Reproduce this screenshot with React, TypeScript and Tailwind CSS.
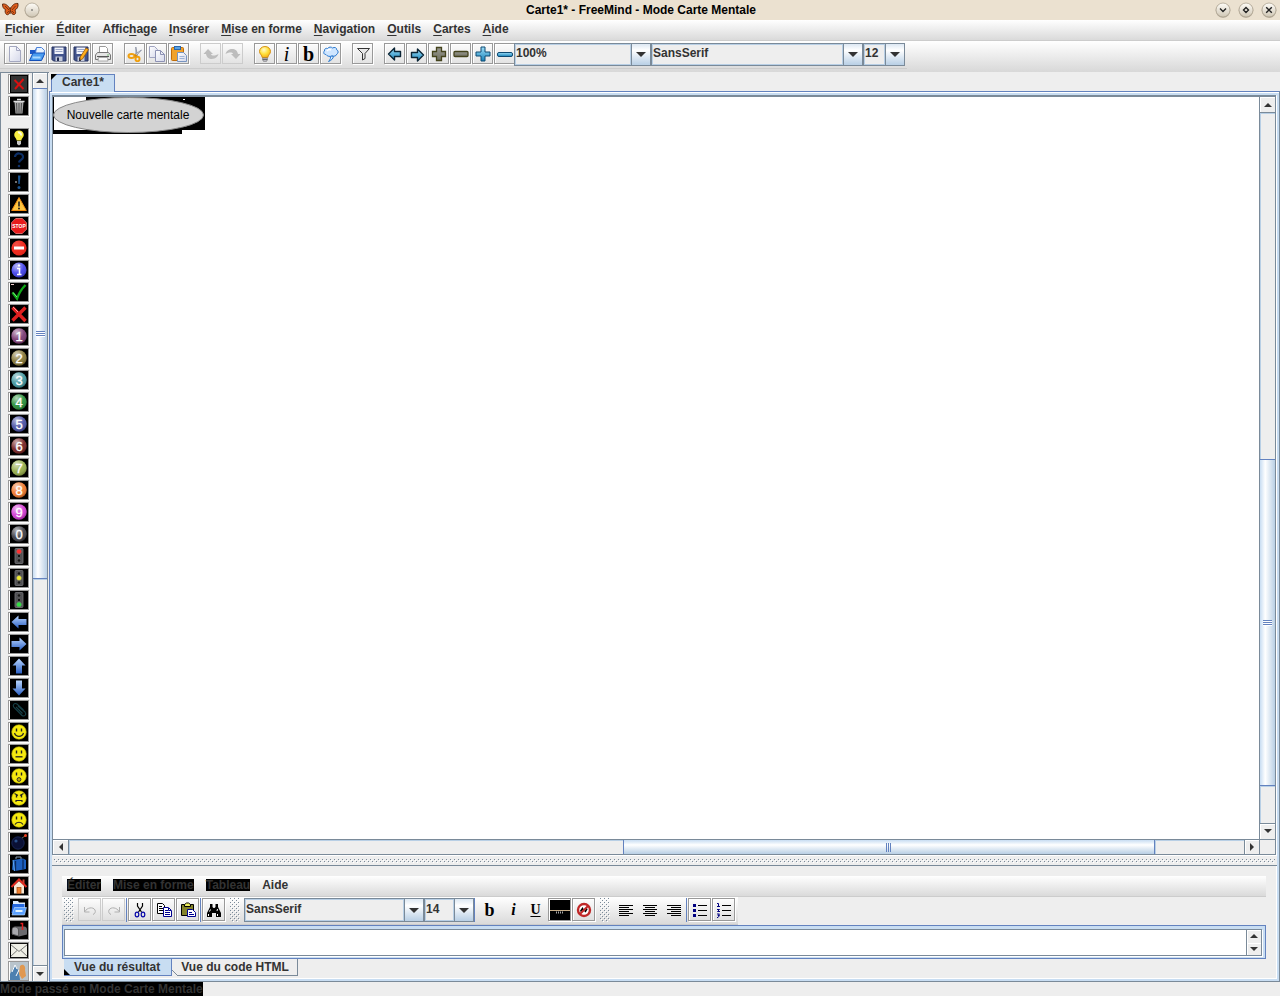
import React from "react";

type Kids = { children?: React.ReactNode };

function Svg({ size = 16, box = 16, children }: Kids & { size?: number; box?: number }) {
  return (
    <svg width={size} height={size} viewBox={`0 0 ${box} ${box}`} fill="none" aria-hidden="true" className="block shrink-0">
      {children}
    </svg>
  );
}

/* ---------- shared gradients ---------- */

function Defs() {
  return (
    <svg width="0" height="0" className="absolute" aria-hidden="true">
      <defs>
        <linearGradient id="blueV" x1="0" y1="0" x2="0" y2="1">
          <stop offset="0" stopColor="#b9d6ff" />
          <stop offset="1" stopColor="#2a5fc4" />
        </linearGradient>
        <linearGradient id="cyanV" x1="0" y1="0" x2="0" y2="1">
          <stop offset="0" stopColor="#9fe0fa" />
          <stop offset="1" stopColor="#1781b8" />
        </linearGradient>
        <linearGradient id="oliveV" x1="0" y1="0" x2="0" y2="1">
          <stop offset="0" stopColor="#9a9a92" />
          <stop offset="1" stopColor="#6f6f60" />
        </linearGradient>
        <linearGradient id="paper" x1="0" y1="0" x2="1" y2="1">
          <stop offset="0" stopColor="#ffffff" />
          <stop offset="1" stopColor="#d5d8ea" />
        </linearGradient>
        <radialGradient id="bulb" cx="0.4" cy="0.3" r="0.8">
          <stop offset="0" stopColor="#fffbd0" />
          <stop offset="0.5" stopColor="#ffe03a" />
          <stop offset="1" stopColor="#f0a010" />
        </radialGradient>
        <linearGradient id="knob" x1="0" y1="0" x2="0" y2="1">
          <stop offset="0" stopColor="#fffdf8" />
          <stop offset="1" stopColor="#cfc6b4" />
        </linearGradient>
        <radialGradient id="shine" cx="0.35" cy="0.25" r="0.8">
          <stop offset="0" stopColor="#ffffff" stopOpacity="0.65" />
          <stop offset="0.6" stopColor="#ffffff" stopOpacity="0.1" />
          <stop offset="1" stopColor="#000000" stopOpacity="0.3" />
        </radialGradient>
        <pattern id="bumps" width="4" height="4" patternUnits="userSpaceOnUse">
          <g shapeRendering="crispEdges">
            <rect x="0" y="0" width="1" height="1" fill="#7a8a99" />
            <rect x="2" y="2" width="1" height="1" fill="#7a8a99" />
            <rect x="1" y="1" width="1" height="1" fill="#fff" />
            <rect x="3" y="3" width="1" height="1" fill="#fff" />
          </g>
        </pattern>
      </defs>
    </svg>
  );
}

/* ---------- main toolbar icons ---------- */

const page = "M2.5.5h7l4 4v11h-11z";

const IconNew = () => (
  <Svg>
    <path d={page} fill="url(#paper)" stroke="#a4a8c0" />
    <path d="M9.500.5v4h4z" fill="#eef" stroke="#a4a8c0" />
  </Svg>
);
const IconOpen = () => (
  <Svg>
    <path d="M1 4h5l1-1.500h5l2 2V8H1z" fill="#1c58c8" />
    <path d="M7.500 1.500h5l3 3-1.500 7-8-2z" fill="#e6f2ff" stroke="#4a80d8" />
    <path d="M.5 14.500L4 7h12l-3.500 7.500z" fill="#4a9cf0" stroke="#1450b8" />
    <path d="M3.500 11.500h8" stroke="#a8d8ff" strokeWidth="2" />
  </Svg>
);
const Floppy = () => (
  <>
    <path d="M1 1h14v14H2.500L1 13.500z" fill="#41538c" stroke="#27335e" />
    <path d="M3.500 1.500h9V8h-9z" fill="#f1f3fa" />
    <path d="M4.500 3.500h7M4.500 5.500h7" stroke="#9aa6c8" />
    <path d="M4.500 10.500h7V15h-7z" fill="#c4cada" />
    <path d="M6 11.500h2V15H6z" fill="#222c50" />
  </>
);
const IconSave = () => <Svg><Floppy /></Svg>;
const IconSaveAs = () => (
  <Svg>
    <Floppy />
    <path d="M13 2l2.500 1.500L9.500 13 7 14l.2-3z" fill="#ffae1c" stroke="#9a5a08" strokeWidth=".8" />
  </Svg>
);
const IconPrint = () => (
  <Svg>
    <path d="M4.500.5h6l2 2v5h-8z" fill="#fff" stroke="#999" />
    <path d="M2.500 6.500h11l2 2.500v4.500H.5V9z" fill="#e4e4e4" stroke="#777" />
    <path d="M2 10.500h12" stroke="#555" />
    <path d="M3.500 11.500h9l.5 3.500H3z" fill="#fafafa" stroke="#999" strokeWidth=".8" />
    <circle cx="13" cy="9" r=".7" fill="#4caf50" />
  </Svg>
);
const IconCut = () => (
  <Svg>
    <path d="M8.800 1L9 9l1.500.5z" fill="#c5cad5" stroke="#858da0" strokeWidth=".8" />
    <path d="M14.500 4L7 9l1.500 1.500z" fill="#dfe3ea" stroke="#858da0" strokeWidth=".8" />
    <ellipse cx="4.500" cy="10" rx="3" ry="2" stroke="#f0a010" strokeWidth="2" />
    <ellipse cx="10.500" cy="13" rx="2" ry="2.200" stroke="#f0a010" strokeWidth="2" />
    <circle cx="8.700" cy="9.500" r="1.200" fill="#d88808" />
  </Svg>
);
const IconCopy = () => (
  <Svg>
    <path d="M.5.5h5l3 3v8h-8z" fill="url(#paper)" stroke="#a0a4c0" />
    <path d="M6.500 4.500h5l4 4v7h-9z" fill="url(#paper)" stroke="#8d92b4" />
    <path d="M11.500 4.500v4h4" stroke="#8d92b4" />
  </Svg>
);
const IconPaste = () => (
  <Svg>
    <rect x=".5" y="1.500" width="12" height="13" rx="1" fill="#f0a22a" stroke="#c06c08" />
    <rect x="3.500" y=".5" width="6" height="3" fill="#5aa0e0" stroke="#2a68ac" />
    <path d="M6.500 6.500h6l3 3v6h-9z" fill="url(#paper)" stroke="#7794c0" />
    <path d="M8.500 10.500h5M8.500 12.500h5" stroke="#9db4d8" />
  </Svg>
);
const IconUndoBig = () => (
  <Svg>
    <path d="M5 3L.5 8H3c.5 4 4.500 6 8.500 4.500 2-.8 3.500-2.500 4-4.500-2 1.500-7 2.500-7.500 0h2z" fill="#bdbdbd" />
  </Svg>
);
const IconRedoBig = () => (
  <Svg>
    <path d="M11 13l4.500-5H13c-.5-4-4.500-6-8.500-4.500C2.500 4.300 1 6 .5 8 2.500 6.500 7.500 5.500 8 8H6z" fill="#bdbdbd" />
  </Svg>
);
const IconBulb = () => (
  <Svg>
    <path d="M8 .5c3.300 0 5.500 2.300 5.500 5 0 2.500-2.500 3.500-2.700 6H5.200C5 9 2.500 8 2.500 5.500 2.500 2.800 4.700.5 8 .5z" fill="url(#bulb)" stroke="#d48a08" strokeWidth=".9" />
    <path d="M5.500 12h5l-.5 3-2 1-2-1z" fill="#b8b8c0" stroke="#777" strokeWidth=".6" />
    <path d="M5.500 13.500h5" stroke="#555" strokeWidth=".8" />
  </Svg>
);
const IconCloud = () => (
  <Svg>
    <path d="M7 9.500c1 2 .5 4-1.500 6 3-1 4.500-3 5-5z" fill="#daeeff" stroke="#2c7ad0" />
    <path d="M3 8.500C.5 8.500.2 6 1.500 5 1 3 3 1.800 4.500 2.500 6 .6 8.500.8 9.500 2c2-1.200 4.500-.3 4.200 1.800 2 .8 1.800 3.500.2 4.200-.5 2-3 2.800-4.700 1.700C7.500 11 4 10.500 3 8.500z" fill="#cfe6ff" stroke="#2c7ad0" />
    <path d="M4 5c1-1.500 3-1.500 4-1" stroke="#fff" strokeWidth="1.500" />
  </Svg>
);
const IconFilter = () => (
  <Svg>
    <path d="M2.500 2.500h12L10 7.500v5l-2.500 1.500V7.500z" fill="#e8e8e8" stroke="#333" />
    <path d="M9.500 8v4" stroke="#999" />
  </Svg>
);
const IconPrev = () => (
  <Svg><path d="M1.500 8l6-6v3.500h6v5h-6V14z" fill="url(#cyanV)" stroke="#0b2536" strokeLinejoin="round" strokeWidth="1.400" /></Svg>
);
const IconNext = () => (
  <Svg><path d="M14.500 9l-6-6v3.500h-6v5h6V15z" fill="url(#cyanV)" stroke="#0b2536" strokeLinejoin="round" strokeWidth="1.400" /></Svg>
);
const plus = "M5.500 1.500h5v4h4v5h-4v4h-5v-4h-4v-5h4z";
const IconPlusOlive = () => <Svg><path d={plus} fill="url(#oliveV)" stroke="#44431c" strokeWidth="1.300" /></Svg>;
const IconMinusOlive = () => <Svg><rect x="1" y="5.500" width="14" height="5" rx="1" fill="url(#oliveV)" stroke="#44431c" strokeWidth="1.300" /></Svg>;
const IconPlusBlue = () => (
  <Svg><path d="M6 1h4v5h5v4h-5v5H6v-5H1V6h5z" fill="url(#cyanV)" stroke="#0f4a72" strokeLinejoin="round" /></Svg>
);
const IconMinusBlue = () => <Svg><rect x=".5" y="6.500" width="15" height="4" rx="1.500" fill="url(#cyanV)" stroke="#0f4a72" /></Svg>;

const glyph = "block font-['Liberation_Serif',serif] text-black";

/* ---------- node icons (18px) ---------- */

function Ball({ fill, n }: { fill: string; n: string }) {
  return (
    <>
      <circle cx="9" cy="9" r="7.700" fill={fill} />
      <circle cx="9" cy="9" r="7.700" fill="url(#shine)" />
      <text x="9" y="13.500" textAnchor="middle" fontSize="13" fill="#fff" stroke="#fff" strokeWidth=".3" fontFamily="Liberation Sans, sans-serif">{n}</text>
    </>
  );
}
function Light({ on }: { on: number }) {
  const c = ["#ff3030", "#f4ee30", "#30e040"];
  return (
    <>
      <rect x="5" y="1.500" width="8" height="15" rx="1" fill="#505054" stroke="#76767a" strokeWidth=".8" />
      {[4.5, 9, 13.5].map((y, i) => (
        <circle key={y} cx="9" cy={y} r={i === on ? 2.500 : 1.700} fill={i === on ? c[i] : "#151515"} stroke="#777" strokeWidth=".5" />
      ))}
    </>
  );
}
function Face({ kind }: { kind: string }) {
  return (
    <>
      <circle cx="9" cy="9" r="7.300" fill="#f6ea10" stroke="#a89c00" strokeWidth=".6" />
      <path d="M6.500 5.500v3M11.500 5.500v3" stroke="#222" strokeWidth="1.400" />
      {kind === "smile" && <path d="M4.500 10c1.500 4.500 7.500 4.500 9 0" stroke="#222" strokeWidth="1.200" />}
      {kind === "flat" && <path d="M5.500 11.800h7" stroke="#222" strokeWidth="1.300" />}
      {kind === "oh" && <circle cx="9" cy="12.500" r="1.900" fill="#c0b010" stroke="#333" />}
      {kind === "angry" && <path d="M4.500 4.500l3.500 2M13.500 4.500l-3.500 2M6 13v-1.500h6V13" stroke="#222" strokeWidth="1.100" />}
      {kind === "sad" && <path d="M5 13.500c1.500-3 6.500-3 8 0" stroke="#222" strokeWidth="1.200" />}
    </>
  );
}
const arrow = "M1.500 9l7-6.500V6H16.500v6H8.500v3.500z";

const nodeIcons: { name: string; art: React.ReactNode }[] = [
  {
    name: "Idée",
    art: (
      <>
        <path d="M9 1.500c3 0 4.800 2 4.800 4.500 0 2.300-2.300 3.300-2.500 5.500H6.700C6.500 9.300 4.200 8.300 4.200 6 4.200 3.500 6 1.500 9 1.500z" fill="#f8ee40" />
        <path d="M8 3.500c1.500-.5 3.500 1 3 3" stroke="#fffde0" strokeWidth="2" />
        <path d="M7 12h4v3l-2 1.500L7 15z" fill="#c8c8c8" />
      </>
    ),
  },
  {
    name: "Question",
    art: (
      <>
        <path d="M5 6c0-5 8.500-4.500 8 .3-.3 2.500-3.500 2.700-4 5.200" stroke="#0d2f66" strokeWidth="2.200" />
        <circle cx="9" cy="15" r="1.300" fill="#0d2f66" />
      </>
    ),
  },
  {
    name: "Important",
    art: (
      <>
        <path d="M8 2.500h2.500L9.700 11H8.300z" fill="#1a5490" />
        <circle cx="9" cy="14.500" r="1.500" fill="#1a5490" />
        <path d="M5 9h2" stroke="#ddd" />
      </>
    ),
  },
  {
    name: "Attention",
    art: (
      <>
        <path d="M9 2.500l7.300 13H1.700z" fill="#ffc640" stroke="#f08a10" strokeLinejoin="round" />
        <path d="M9 6.500v5" stroke="#222" strokeWidth="1.600" />
        <circle cx="9" cy="13.500" r="1" fill="#222" />
      </>
    ),
  },
  {
    name: "Stop",
    art: (
      <>
        <path d="M5.700 1.500h6.600L16.500 5.700v6.600L12.300 16.500H5.700L1.500 12.300V5.700z" fill="#e81c1c" stroke="#ff8c8c" strokeWidth=".7" />
        <text x="9" y="11" textAnchor="middle" fontSize="5" fontWeight="bold" fill="#fff" fontFamily="Liberation Sans, sans-serif">STOP</text>
      </>
    ),
  },
  {
    name: "Interdit",
    art: (
      <>
        <circle cx="9" cy="9" r="7.600" fill="#ee2418" />
        <circle cx="9" cy="9" r="7.600" fill="url(#shine)" opacity=".3" />
        <rect x="4" y="7.500" width="10" height="3" fill="#fff" />
      </>
    ),
  },
  {
    name: "Information",
    art: (
      <>
        <circle cx="9" cy="9" r="7.500" fill="#3838e8" />
        <circle cx="9" cy="9" r="7.500" fill="url(#shine)" />
        <path d="M7 7.500h2.500v6M7 13.500h4.500" stroke="#fff" strokeWidth="1.600" />
        <circle cx="9" cy="4.500" r="1.200" fill="#fff" />
      </>
    ),
  },
  {
    name: "Valider",
    art: (
      <>
        <path d="M2.500 9.500L7 15.500C9 10 11.500 6 15.500 2" stroke="#10a818" strokeWidth="2.400" />
        <path d="M3 9.500l4 4.500" stroke="#80f080" />
        <path d="M1 1.500h3" stroke="#eecccc" />
      </>
    ),
  },
  {
    name: "Refuser",
    art: (
      <>
        <path d="M2.500 2.500L15.500 16M15.500 2.500L2.500 15.500" stroke="#e02020" strokeWidth="3.400" />
        <path d="M3 2l5 5" stroke="#ff9a9a" />
      </>
    ),
  },
  { name: "Priorité 1", art: <Ball n="1" fill="#75306c" /> },
  { name: "Priorité 2", art: <Ball n="2" fill="#80702c" /> },
  { name: "Priorité 3", art: <Ball n="3" fill="#38929a" /> },
  { name: "Priorité 4", art: <Ball n="4" fill="#1e8a30" /> },
  { name: "Priorité 5", art: <Ball n="5" fill="#4048a0" /> },
  { name: "Priorité 6", art: <Ball n="6" fill="#701818" /> },
  { name: "Priorité 7", art: <Ball n="7" fill="#90a840" /> },
  { name: "Priorité 8", art: <Ball n="8" fill="#f07020" /> },
  { name: "Priorité 9", art: <Ball n="9" fill="#d030d0" /> },
  { name: "Priorité 0", art: <Ball n="0" fill="#34343c" /> },
  { name: "Feu rouge", art: <Light on={0} /> },
  { name: "Feu orange", art: <Light on={1} /> },
  { name: "Feu vert", art: <Light on={2} /> },
  { name: "Gauche", art: <path d={arrow} fill="url(#blueV)" /> },
  { name: "Droite", art: <path d={arrow} fill="url(#blueV)" transform="matrix(-1 0 0 1 18 0)" /> },
  { name: "Haut", art: <path d="M9 1.500l6.500 7H12V16.500H6V8.500H2.500z" fill="url(#blueV)" /> },
  { name: "Bas", art: <path d="M9 16.500l6.500-7H12V1.500H6v8H2.500z" fill="url(#blueV)" /> },
  {
    name: "Pièce jointe",
    art: <path d="M13.500 9L7 3C4.500 1.500 2 4 4 6.500l8 8c2.500 1.500 5-1 3-3.500L8 5M6 6l6.500 6.500" stroke="#164048" strokeWidth="1.100" />,
  },
  { name: "Content", art: <Face kind="smile" /> },
  { name: "Neutre", art: <Face kind="flat" /> },
  { name: "Surpris", art: <Face kind="oh" /> },
  { name: "Fâché", art: <Face kind="angry" /> },
  { name: "Triste", art: <Face kind="sad" /> },
  {
    name: "Bombe",
    art: (
      <>
        <circle cx="8" cy="10" r="6.200" fill="#0a1034" stroke="#1c2c60" strokeWidth=".8" />
        <circle cx="6" cy="8" r="1.600" fill="#28508a" />
        <path d="M12 5l3-2" stroke="#665" />
        <circle cx="15.500" cy="2.500" r="1.500" fill="#f04020" />
      </>
    ),
  },
  {
    name: "Valise",
    art: (
      <>
        <path d="M3 5l10-1.500L16 5v9L5 16l-3-1.500z" fill="#1c60c0" />
        <path d="M5.500 6v10M13 4.500v10" stroke="#0b2c60" strokeWidth="1.300" />
        <path d="M6 4V2h5v2" stroke="#8899aa" />
        <path d="M3 5l1.500 11" stroke="#60a8f0" />
      </>
    ),
  },
  {
    name: "Maison",
    art: (
      <>
        <path d="M4 8.500L9 4l5 4.500V16.500H4z" fill="#f8e8d4" />
        <path d="M12.500 2.500h2V7h-2z" fill="#d04030" />
        <path d="M1.500 10L9 2.500l7.500 7.500" stroke="#e02c20" strokeWidth="2" />
        <rect x="7" y="10.500" width="4" height="6" fill="#f08030" stroke="#a04810" strokeWidth=".7" />
      </>
    ),
  },
  {
    name: "Dossier",
    art: (
      <>
        <path d="M3 2h5l1 1.500h6V9H3z" fill="#dcecff" />
        <path d="M2.500 5h12v11L1.500 14z" fill="#2468e0" />
        <path d="M4.500 8.500h12L14.500 16H2z" fill="#5aa0ff" stroke="#c8e4ff" strokeWidth=".6" />
        <path d="M5.500 12h7" stroke="#e4f4ff" strokeWidth="2" />
      </>
    ),
  },
  {
    name: "Boîte aux lettres",
    art: (
      <>
        <path d="M2 9c0-3 2-3.500 4-3.500h8c2 0 3 1.500 3 3.500v4.500l-8 2-7-2z" fill="#6a6a6e" />
        <path d="M2 9c0-4 6-4 6.500 0v6l-6.500-2z" fill="#a8a8ac" stroke="#444" strokeWidth=".7" />
        <path d="M12.500 9V2.500h-2" stroke="#e02020" strokeWidth="1.500" />
      </>
    ),
  },
];

/* ---------- controls ---------- */

const bevel = "flex shrink-0 items-center justify-center border border-[#999] shadow-[1px_1px_0_#fff,inset_1px_1px_0_#fff]";

function ToolButton({ label, off, children }: Kids & { label: string; off?: boolean }) {
  return (
    <button
      aria-label={label}
      disabled={off}
      className={off
        ? "mr-px flex h-[21px] w-[21px] shrink-0 items-center justify-center border border-[#ccc]"
        : `${bevel} mr-px h-[21px] w-[21px]`}
    >
      {children}
    </button>
  );
}

function Combo({ label, value, className }: { label: string; value: string; className: string }) {
  return (
    <div className={`flex shrink-0 border border-[#7a8a99] ${className}`}>
      <select
        aria-label={label}
        defaultValue={value}
        className="min-w-0 flex-1 appearance-none border border-[#b8cfe5] bg-[#eee] pb-[3px] font-bold text-[#333] outline-none"
      >
        <option>{value}</option>
      </select>
      <span className="pointer-events-none flex w-[19px] items-center justify-center border-l border-[#7a8a99] bg-linear-to-b from-[#dde8f3] via-white via-30% to-[#b8cfe5]">
        <svg width="10" height="5" viewBox="0 0 10 5" aria-hidden="true"><path d="M0 0h10L5 5z" fill="#333" /></svg>
      </span>
    </div>
  );
}

function ScrollArrow({ dir, className }: { dir: "up" | "down" | "left" | "right"; className: string }) {
  const d = { up: "M0 6h8L4 2z", down: "M0 2h8L4 6z", left: "M6 0v8L2 4z", right: "M2 0v8l4-4z" }[dir];
  return (
    <button aria-label={`Défiler ${dir}`} className={`flex shrink-0 items-center justify-center bg-[#eee] shadow-[inset_1px_1px_0_#fff] ${className}`}>
      <svg width="8" height="8" viewBox="0 0 8 8" aria-hidden="true"><path d={d} fill="#333" /></svg>
    </button>
  );
}

const thumbV = "flex flex-col items-center justify-center gap-px border-y border-[#6382bf] bg-linear-to-r from-[#c8ddf2] via-white via-35% to-[#b8cfe5]";
const GripV = () => (
  <>
    <i className="h-px w-[9px] bg-[#6382bf] shadow-[0_1px_0_#fff]" />
    <i className="h-px w-[9px] bg-[#6382bf] shadow-[0_1px_0_#fff]" />
    <i className="h-px w-[9px] bg-[#6382bf] shadow-[0_1px_0_#fff]" />
  </>
);

function Bumps({ className }: { className: string }) {
  return (
    <svg className={`block shrink-0 ${className}`} aria-hidden="true">
      <rect width="100%" height="100%" fill="url(#bumps)" />
    </svg>
  );
}

function WindowKnob({ label, children }: Kids & { label: string }) {
  return (
    <button aria-label={label} className="shrink-0">
      <Svg size={16}>
        <circle cx="8" cy="8.500" r="7.300" fill="#8d8371" opacity=".6" />
        <circle cx="8" cy="8" r="7" fill="url(#knob)" stroke="#a79d8b" strokeWidth=".7" />
        {children}
      </Svg>
    </button>
  );
}

/* ---------- sections ---------- */

function TitleBar() {
  return (
    <header className="flex h-5 shrink-0 items-center bg-[#ebe1d0] pr-[3px] pb-px pl-0.5">
      <svg width="17" height="15" viewBox="0 0 17 15" aria-hidden="true" className="mr-[5px] block">
        <path d="M8 7C6 3 3 1.500.5 2c0 3 1 5 3 5.500-1 2 0 4 1 5 2 1 3.500-1.500 4-4 .5 2.500 2 4.500 4 4 1.300-.7 1.500-2.500.5-4.500C15 7 16.500 5 16 1.500 12.500 1 10 3 8.500 7z" fill="#dc5c1c" stroke="#5a2408" strokeWidth=".9" />
        <path d="M8.200 5v7M3 4l4 4M13.500 4L10 8M5 11l2-2M12 11l-2-2" stroke="#6a2c0a" strokeWidth=".8" />
      </svg>
      <WindowKnob label="Menu"><circle cx="8" cy="8" r=".8" fill="#444" /></WindowKnob>
      <h1 className="flex-1 pl-[27px] text-center text-xs font-bold text-black">Carte1* - FreeMind - Mode Carte Mentale</h1>
      <div className="flex gap-[7px]">
        <WindowKnob label="Réduire"><path d="M5 6.500L8 9.500l3-3" stroke="#222" strokeWidth="1.400" /></WindowKnob>
        <WindowKnob label="Agrandir"><path d="M8 5.500L10.500 8 8 10.500 5.500 8z" stroke="#222" strokeWidth="1.400" /></WindowKnob>
        <WindowKnob label="Fermer"><path d="M5.200 5.200l5.600 5.600M10.800 5.200l-5.600 5.600" stroke="#222" strokeWidth="1.400" /></WindowKnob>
      </div>
    </header>
  );
}

const menus: [string, string, string][] = [
  ["", "F", "ichier"],
  ["", "É", "diter"],
  ["Affic", "h", "age"],
  ["", "I", "nsérer"],
  ["", "M", "ise en forme"],
  ["", "N", "avigation"],
  ["", "O", "utils"],
  ["", "C", "artes"],
  ["", "A", "ide"],
];

function MenuBar() {
  return (
    <nav className="flex h-[21px] shrink-0 gap-3 border-b border-[#ccc] bg-linear-to-b from-white to-[#dadada] pb-[3px] pl-[5px]">
      {menus.map(([a, k, b]) => (
        <button key={a + k + b} className="font-bold">
          {a}<u className="underline-offset-2">{k}</u>{b}
        </button>
      ))}
    </nav>
  );
}

function ToolBar() {
  return (
    <div className="h-[31px] shrink-0 bg-linear-to-b from-white to-[#d8d8d8]">
      <div className="flex h-7 w-[907px] items-start border-b border-[#ccc] pt-0.5 pl-1">
        <ToolButton label="Nouveau"><IconNew /></ToolButton>
        <ToolButton label="Ouvrir"><IconOpen /></ToolButton>
        <ToolButton label="Enregistrer"><IconSave /></ToolButton>
        <ToolButton label="Enregistrer sous"><IconSaveAs /></ToolButton>
        <ToolButton label="Imprimer"><IconPrint /></ToolButton>
        <span className="w-2.5 shrink-0" />
        <ToolButton label="Couper"><IconCut /></ToolButton>
        <ToolButton label="Copier"><IconCopy /></ToolButton>
        <ToolButton label="Coller"><IconPaste /></ToolButton>
        <span className="w-2.5 shrink-0" />
        <ToolButton label="Annuler" off><IconUndoBig /></ToolButton>
        <ToolButton label="Rétablir" off><IconRedoBig /></ToolButton>
        <span className="w-2.5 shrink-0" />
        <ToolButton label="Idée"><IconBulb /></ToolButton>
        <ToolButton label="Italique"><span className={`${glyph} text-xl leading-4 italic`}>i</span></ToolButton>
        <ToolButton label="Gras"><b className={`${glyph} text-xl leading-4`}>b</b></ToolButton>
        <ToolButton label="Nuage"><IconCloud /></ToolButton>
        <span className="w-2.5 shrink-0" />
        <ToolButton label="Filtre"><IconFilter /></ToolButton>
        <span className="w-2.5 shrink-0" />
        <ToolButton label="Précédent"><IconPrev /></ToolButton>
        <ToolButton label="Suivant"><IconNext /></ToolButton>
        <ToolButton label="Déplier"><IconPlusOlive /></ToolButton>
        <ToolButton label="Replier"><IconMinusOlive /></ToolButton>
        <ToolButton label="Agrandir"><IconPlusBlue /></ToolButton>
        <ToolButton label="Rétrécir"><IconMinusBlue /></ToolButton>
        <div className="-ml-0.5 flex">
          <Combo label="Zoom" value="100%" className="h-[23px] w-[137px]" />
          <Combo label="Police" value="SansSerif" className="h-[23px] w-[212px]" />
          <Combo label="Taille" value="12" className="h-[23px] w-[42px]" />
        </div>
      </div>
    </div>
  );
}

function NodeButton({ label, children }: Kids & { label: string }) {
  return (
    <button aria-label={label} className={`${bevel} mb-0.5 h-5 w-[21px] bg-[#eee]`}>
      {children}
    </button>
  );
}

function IconPanel() {
  return (
    <aside className="flex w-[49px] shrink-0 border-t border-l border-[#7a8a99] pr-px">
      <div className="flex h-0 min-h-full min-w-0 flex-1 flex-col overflow-hidden border-b border-[#7a8a99] pt-px pl-[7px]">
        <NodeButton label="Supprimer la dernière icône">
          <Svg size={18} box={18}>
            <rect width="18" height="18" fill="#333" stroke="#000" strokeWidth="2" />
            <path d="M4.500 5l9 9M13.500 4L5 14" stroke="#d81010" strokeWidth="2" />
          </Svg>
        </NodeButton>
        <NodeButton label="Supprimer toutes les icônes">
          <Svg size={18} box={18}>
            <rect width="18" height="18" fill="#000" />
            <path d="M4.500 5h9l-1 11.500h-7z" fill="#a8a8a8" />
            <path d="M6.500 6l.5 10M9 6v10M11.500 6L11 16" stroke="#505050" />
            <path d="M3.500 4.500h11M7 2.500h4" stroke="#ddd" strokeWidth="1.500" />
          </Svg>
        </NodeButton>
        <span className="h-2.5 shrink-0" />
        {nodeIcons.map((icon) => (
          <NodeButton key={icon.name} label={icon.name}>
            <Svg size={18} box={18}>
              <rect width="18" height="18" fill="#000" />
              {icon.art}
            </Svg>
          </NodeButton>
        ))}
        <button aria-label="Courriel" className={`${bevel} mb-0.5 h-[17px] w-[21px]`}>
          <svg width="18" height="15" viewBox="0 0 18 16" preserveAspectRatio="none" aria-hidden="true">
            <rect width="18" height="16" fill="#000" />
            <path d="M1 1h16v14H1z" fill="#efefe6" />
            <path d="M1 2l8 7 8-7M1 14l6-6M17 14l-6-6" stroke="#666" fill="none" strokeWidth=".9" />
          </svg>
        </button>
        <NodeButton label="Image">
          <Svg size={18} box={18}>
            <rect width="18" height="18" fill="#b8c4cc" />
            <path d="M0 18V12l5-9 4 7 1 8z" fill="#4c80b0" />
            <path d="M2 10l3-7 2 4M6 14l3-6" stroke="#fff" />
            <path d="M10 4c3-3 6 0 5 4l1 6-4 3-3-5z" fill="#e09850" />
          </Svg>
        </NodeButton>
      </div>
      <div className="flex w-4 shrink-0 flex-col border-x border-b border-[#7a8a99]">
        <ScrollArrow dir="up" className="h-[15px]" />
        <div className={`${thumbV} flex-[490]`}><GripV /></div>
        <div className="flex-[386] shadow-[inset_1px_1px_0_#b8cfe5]" />
        <ScrollArrow dir="down" className="h-4 border-t border-[#7a8a99]" />
      </div>
    </aside>
  );
}

function MapNode() {
  return (
    <div className="relative flex h-[37px] w-[152px] items-center justify-center pb-0.5">
      <svg width="152" height="37" viewBox="0 0 152 37" className="absolute inset-0" aria-hidden="true">
        <path d="M0 0h152v33H129v4H0z" fill="#000" />
        <path d="M1 0h32v33H1z" fill="#fff" />
        <ellipse cx="75.500" cy="18" rx="75" ry="17.500" fill="#d3d3d3" stroke="#888" />
        <path d="M130 2.500h2" stroke="#fff" />
      </svg>
      <span className="relative pr-0.5 whitespace-nowrap text-black">Nouvelle carte mentale</span>
    </div>
  );
}

function MapView() {
  return (
    <div className="mr-px flex min-h-0 flex-1 flex-col border border-t-2 border-[#7a8a99] shadow-[1px_1px_0_#fff]">
      <div className="flex min-h-0 flex-1">
        <main className="min-w-0 flex-1 bg-white">
          <MapNode />
        </main>
        <div className="flex w-4 shrink-0 flex-col border-l border-[#7a8a99]">
          <ScrollArrow dir="up" className="h-4 border-b border-[#7a8a99]" />
          <div className="flex-[347] shadow-[inset_1px_1px_0_#b8cfe5]" />
          <div className={`${thumbV} flex-[326]`}><GripV /></div>
          <div className="flex-[37] shadow-[inset_1px_1px_0_#b8cfe5]" />
          <ScrollArrow dir="down" className="h-4 border-t border-[#7a8a99]" />
        </div>
      </div>
      <div className="flex h-[15px] shrink-0 border-t border-[#7a8a99]">
        <ScrollArrow dir="left" className="w-4 border-r border-[#7a8a99]" />
        <div className="flex-[555] shadow-[inset_1px_1px_0_#b8cfe5]" />
        <div className="flex flex-[532] items-center justify-center gap-px border-x border-[#6382bf] bg-linear-to-b from-[#c8ddf2] via-white via-35% to-[#b8cfe5]">
          <i className="h-[9px] w-px bg-[#6382bf]" />
          <i className="h-[9px] w-px bg-[#6382bf]" />
          <i className="h-[9px] w-px bg-[#6382bf]" />
        </div>
        <div className="flex-[89] shadow-[inset_1px_1px_0_#b8cfe5]" />
        <ScrollArrow dir="right" className="w-4 border-x border-[#7a8a99]" />
        <span className="w-[15px]" />
      </div>
    </div>
  );
}

function EditButton({ label, flat, off, children }: Kids & { label: string; flat?: boolean; off?: boolean }) {
  const base = "mr-px flex h-[23px] w-[23px] shrink-0 items-center justify-center";
  return (
    <button
      aria-label={label}
      disabled={off}
      className={`${base} ${flat ? "" : off ? "border border-[#ccc]" : "border border-[#999] shadow-[1px_1px_0_#fff,inset_1px_1px_0_#fff]"}`}
    >
      {children}
    </button>
  );
}

const Lines = ({ d }: { d: string }) => (
  <Svg><path d={d} stroke="#000" shapeRendering="crispEdges" /></Svg>
);

const Divider = () => <span className="mr-px h-6 w-px shrink-0 bg-[#6382bf]" />;

function EditorToolBar() {
  return (
    <div className="flex h-7 w-[676px] items-start border-b border-[#ccc] bg-linear-to-b from-white to-[#dadada] pt-px pl-0.5">
      <Bumps className="mr-1 h-6 w-[10px]" />
      <EditButton label="Annuler" off>
        <Svg><path d="M2.500 5v5h5M3 9.500c2-4 8-5 10-1.500 1 2-.5 4-2 4.500" stroke="#b0b0b0" /></Svg>
      </EditButton>
      <EditButton label="Rétablir" off>
        <Svg><path d="M13.500 5v5h-5M13 9.500c-2-4-8-5-10-1.500-1 2 .5 4 2 4.500" stroke="#b0b0b0" /></Svg>
      </EditButton>
      <Divider />
      <EditButton label="Couper">
        <Svg>
          <path d="M5.500 1v3l4 6M10.500 1v3l-4 6" stroke="#000" strokeWidth="1.200" />
          <ellipse cx="5" cy="12.500" rx="1.800" ry="2.300" stroke="#0808a8" strokeWidth="1.200" />
          <ellipse cx="11" cy="12.500" rx="1.800" ry="2.300" stroke="#0808a8" strokeWidth="1.200" />
        </Svg>
      </EditButton>
      <EditButton label="Copier">
        <Svg>
          <path d="M1.500 1.500h5l2 2v8h-7z" fill="#fff" stroke="#000" />
          <path d="M3 4.500h3M3 6.500h4M3 8.500h4" stroke="#000" />
          <path d="M7.500 5.500h5l3 3v6h-8z" fill="#fff" stroke="#000090" />
          <path d="M9 8.500h3M9 10.500h5M9 12.500h5M12.500 6v2.500H15" stroke="#000090" />
        </Svg>
      </EditButton>
      <EditButton label="Coller">
        <Svg>
          <path d="M1.500 2.500h12v11h-12z" fill="#84842a" stroke="#000" />
          <path d="M4.500 4.500v-2l2-1.500h2l2 1.500v2z" fill="#f0f060" stroke="#000" />
          <path d="M7.500 7.500h5l3 3v4h-8z" fill="#fff" stroke="#000090" />
          <path d="M9 10.500h3M9 12.500h5" stroke="#000090" />
        </Svg>
      </EditButton>
      <Divider />
      <EditButton label="Rechercher">
        <Svg>
          <path d="M4 2h2.500v3L7.500 6h1l1-1V2H12v3l3 6v4h-5v-4H6v4H1v-4l3-6z" fill="#000" />
          <path d="M3.500 9.500l1-2M11 9l.5-2M2.500 12v2M11.500 12v2" stroke="#fff" />
        </Svg>
      </EditButton>
      <Bumps className="mr-1 ml-1 h-6 w-[10px]" />
      <Combo label="Police du texte" value="SansSerif" className="h-6 w-[180px]" />
      <Combo label="Taille du texte" value="14" className="h-6 w-[50px]" />
      <Divider />
      <EditButton label="Gras" flat><b className={`${glyph} pl-1 text-lg leading-5`}>b</b></EditButton>
      <EditButton label="Italique" flat><b className={`${glyph} pl-1 text-base leading-5 italic`}>i</b></EditButton>
      <EditButton label="Souligné" flat><b className={`${glyph} text-sm leading-5 underline underline-offset-2`}>U</b></EditButton>
      <EditButton label="Couleur">
        <Svg size={20} box={20}>
          <rect width="20" height="20" fill="#000" />
          <path d="M0 10.500h20" stroke="#c8ae88" />
          <path d="M6 12.500h8" stroke="#aaa" strokeDasharray="1 1" strokeWidth="2" />
        </Svg>
      </EditButton>
      <EditButton label="Effacer la mise en forme">
        <Svg>
          <circle cx="8" cy="8" r="6" fill="#fff" stroke="#c02828" strokeWidth="2.400" />
          <path d="M4.500 9.500l2-3 1 2M9 10l2-3.500" stroke="#000" strokeWidth="1.600" />
          <path d="M3.500 12.500l9-9" stroke="#c02828" strokeWidth="2" />
        </Svg>
      </EditButton>
      <Bumps className="mr-1 ml-1 h-6 w-[10px]" />
      <EditButton label="Aligner à gauche" flat><Lines d="M1 3.500h14M1 5.500h10M1 7.500h14M1 9.500h10M1 11.500h14M1 13.500h10" /></EditButton>
      <EditButton label="Centrer" flat><Lines d="M1 3.500h14M3 5.500h10M1 7.500h14M3 9.500h10M1 11.500h14M3 13.500h10" /></EditButton>
      <EditButton label="Aligner à droite" flat><Lines d="M1 3.500h14M5 5.500h10M1 7.500h14M5 9.500h10M1 11.500h14M5 13.500h10" /></EditButton>
      <Divider />
      <EditButton label="Liste à puces">
        <Svg>
          <path d="M1 3.500h3M1 8.500h3M1 13.500h3" stroke="#000080" strokeWidth="3" />
          <path d="M6 3.500h9M6 8.500h9M6 13.500h9" stroke="#000" />
        </Svg>
      </EditButton>
      <EditButton label="Liste numérotée">
        <Svg>
          <path d="M1 1.500h1.500V5M1 4.500h3M1 7.500h2.500L1.500 9.500H4M1 12h2.500L2 13.500h1.500L2 15.500H1" stroke="#000080" />
          <path d="M6 3.500h9M6 8.500h9M6 13.500h9" stroke="#000" />
        </Svg>
      </EditButton>
    </div>
  );
}

function Editor() {
  return (
    <section className="shrink-0 border-t border-[#7a8a99] pt-2.5 pr-[11px] pb-[3px] pl-2.5 shadow-[inset_-1px_-1px_0_#fff]">
      <nav className="flex h-[21px] items-center gap-3 border-b border-[#ccc] bg-linear-to-b from-white to-[#dadada] pb-0.5 pl-[5px] font-bold leading-3">
        <button className="bg-black">Éditer</button>
        <button className="bg-black">Mise en forme</button>
        <button className="bg-black">Tableau</button>
        <button>Aide</button>
      </nav>
      <EditorToolBar />
      <div className="flex h-[34px] border border-[#6382bf] bg-[#c8ddf2] pt-[3px] pr-[3px] pb-0.5 pl-px">
        <div className="flex flex-1 border border-[#7a8a99] shadow-[1px_1px_0_#fff]">
          <textarea aria-label="Texte du nœud" className="min-w-0 flex-1 resize-none bg-white outline-none" />
          <div className="flex w-[15px] shrink-0 flex-col border-l border-[#7a8a99]">
            <ScrollArrow dir="up" className="min-h-0 flex-1" />
            <ScrollArrow dir="down" className="min-h-0 flex-1" />
          </div>
        </div>
      </div>
      <div className="flex h-[17px] pl-0.5 font-bold leading-4">
        <button className="relative border-r border-b border-[#6382bf] bg-[#c8ddf2] pr-[11px] pl-2.5">
          <svg width="6" height="6" viewBox="0 0 6 6" className="absolute bottom-0 left-0" aria-hidden="true"><path d="M0 0l6 6H0z" fill="#000" /></svg>
          Vue du résultat
        </button>
        <button className="relative border-r border-b border-[#7a8a99] pr-2 pl-[9px]">
          <svg width="6" height="6" viewBox="0 0 6 6" className="absolute -bottom-px left-0" aria-hidden="true">
            <path d="M0 0l6 6H0z" fill="#eee" />
            <path d="M0 0l6 6" stroke="#7a8a99" />
          </svg>
          Vue du code HTML
        </button>
      </div>
    </section>
  );
}

export default function App() {
  return (
    <div className="flex h-screen flex-col overflow-hidden bg-[#eee] font-['Liberation_Sans',sans-serif] text-xs text-[#333]">
      <Defs />
      <TitleBar />
      <MenuBar />
      <ToolBar />
      <div className="flex min-h-0 flex-1">
        <IconPanel />
        <div className="flex min-w-0 flex-1 flex-col">
          <div className="flex h-[19px] shrink-0 items-end pl-0.5">
            <button className="relative z-10 -mb-px h-[18px] border border-b-0 border-[#6382bf] bg-[#c8ddf2] px-2.5 pb-[3px] font-bold leading-3.5">
              <svg width="6" height="6" viewBox="0 0 6 6" className="absolute -top-px -left-px" aria-hidden="true"><path d="M0 0h6L0 6z" fill="#000" /></svg>
              Carte1*
            </button>
          </div>
          <div className="flex min-h-0 flex-1 flex-col border-t border-r border-b border-l border-t-[#6382bf] border-r-[#7a8a99] border-b-[#7a8a99] border-l-[#6382bf] bg-[#c8ddf2] px-0.5 pt-[3px] pb-0.5 shadow-[inset_0_1px_0_#fff]">
            <div className="flex min-h-0 flex-1 flex-col bg-[#eee]">
              <MapView />
              <div className="h-2.5 shrink-0 px-0.5 pt-1">
                <Bumps className="h-1 w-full" />
              </div>
              <Editor />
            </div>
          </div>
        </div>
      </div>
      <footer className="flex h-3.5 shrink-0">
        <span className="bg-black font-bold leading-3.5">Mode passé en Mode Carte Mentale</span>
      </footer>
    </div>
  );
}
